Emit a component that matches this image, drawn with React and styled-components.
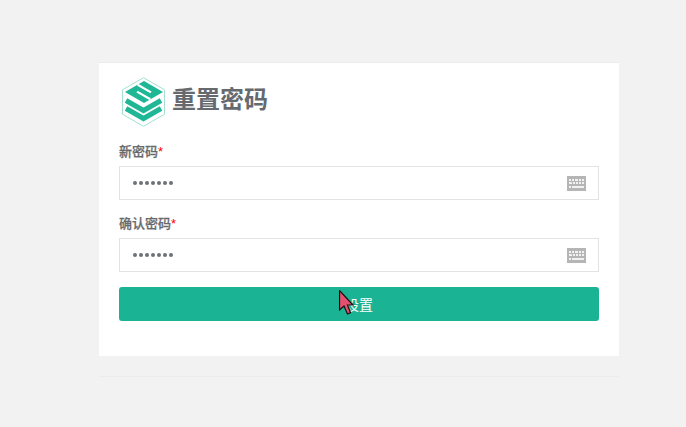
import React from "react";
import styled, { createGlobalStyle } from "styled-components";

const Global = createGlobalStyle`
  html, body { margin: 0; padding: 0; background: #f2f2f2; }
  body { font-family: "Liberation Sans", "Noto Sans CJK SC", sans-serif; }
`;

const Page = styled.div`
  width: 686px;
  height: 427px;
  overflow: hidden;
  position: relative;
  padding-top: 62px;
  box-sizing: border-box;
`;

const Card = styled.main`
  width: 520px;
  height: 294px;
  margin-left: 99px;
  box-sizing: border-box;
  background: #fff;
  border-top: 1px solid #ebebeb;
  padding: 14px 20px 0;
`;

const Brand = styled.div`
  display: flex;
  align-items: center;
  height: 50px;
  margin-left: 3px;
  gap: 6px;
`;

const Title = styled.h1`
  margin: 0 0 5px;
  font-size: 24px;
  line-height: 32px;
  font-weight: 700;
  color: #666a6e;
`;

const Field = styled.div`
  margin-top: ${(p) => p.$top}px;
`;

const Label = styled.label`
  display: block;
  font-size: 13px;
  line-height: 16px;
  font-weight: 500;
  color: #676a6c;
  height: 22px;
  -webkit-text-stroke: 0.25px #676a6c;
`;

const Required = styled.em`
  color: #f00;
  font-style: normal;
  -webkit-text-stroke: 0;
`;

const InputBox = styled.div`
  display: flex;
  align-items: center;
  justify-content: space-between;
  height: 34px;
  box-sizing: border-box;
  border: 1px solid #e3e3e3;
  background: #fff;
  padding: 0 12px 0 13px;
`;

const Dots = styled.span`
  display: flex;
  gap: 2px;
`;

const Dot = styled.i`
  width: 4px;
  height: 4px;
  border-radius: 50%;
  background: #6d7278;
`;

const SubmitButton = styled.button`
  display: block;
  width: 100%;
  height: 34px;
  margin-top: 15px;
  border: 0;
  border-radius: 3px;
  background: #1ab394;
  color: #fff;
  font-family: inherit;
  font-size: 14px;
  padding: 0;
`;

const Cursor = styled.svg`
  position: absolute;
  left: 339px;
  top: 290px;
`;

const Rule = styled.hr`
  width: 520px;
  margin: 20px 0 0 99px;
  border: 0;
  border-top: 1px solid #ebebeb;
`;

const Logo = () => (
  <svg width="44" height="50" viewBox="0 0 44 50" fill="none">
    <path d="M21.500 .7 42.500 12.800V37.200L21.500 49.300 .5 37.200V12.800Z" fill="#fff" stroke="#a5e0d2" strokeWidth="1" />
    <path d="M3 15 22 4 41 15 22 26Z" fill="#1fb795" />
    <path d="M15.700 7.700 29 15.400M28.300 22.300 15 14.600" stroke="#fff" strokeWidth="2.200" />
    <g stroke="#1fb795" strokeWidth="5" fill="none">
      <path d="M4 23.500 21.500 33.500 39 23.500" />
      <path d="M4 31.500 21.500 41.500 39 31.500" />
    </g>
  </svg>
);

const KeyboardIcon = () => (
  <svg width="19" height="15" viewBox="0 0 19 15">
    <rect width="19" height="15" fill="#b5b5b5" />
    <g fill="#f1f1f1">
      <rect x="2" y="3" width="2" height="2" />
      <rect x="5" y="3" width="2" height="2" />
      <rect x="8" y="3" width="3" height="2" />
      <rect x="12" y="3" width="2" height="2" />
      <rect x="15" y="3" width="2" height="2" />
      <rect x="2" y="6" width="3" height="2" />
      <rect x="6" y="6" width="2" height="2" />
      <rect x="9" y="6" width="2" height="2" />
      <rect x="12" y="6" width="2" height="2" />
      <rect x="15" y="6" width="2" height="2" />
      <rect x="2" y="10" width="2" height="2" />
      <rect x="5" y="10" width="12" height="2" />
    </g>
  </svg>
);

const PasswordField = ({ label, top }) => (
  <Field $top={top}>
    <Label>{label}<Required>*</Required></Label>
    <InputBox>
      <Dots>{Array.from({ length: 7 }, (_, i) => <Dot key={i} />)}</Dots>
      <KeyboardIcon />
    </InputBox>
  </Field>
);

export default function App() {
  return (
    <Page>
      <Global />
      <Card>
        <Brand>
          <Logo />
          <Title>重置密码</Title>
        </Brand>
        <PasswordField label="新密码" top={17} />
        <PasswordField label="确认密码" top={16} />
        <SubmitButton type="button">设置</SubmitButton>
      </Card>
      <Rule />
      <Cursor width="18" height="26" viewBox="0 0 18 26">
        <path d="M.5.500V20L5 16l3.500 8 3-1.300L8.500 15H14Z" fill="#e4506f" stroke="#111" strokeWidth="1.200" />
      </Cursor>
    </Page>
  );
}
